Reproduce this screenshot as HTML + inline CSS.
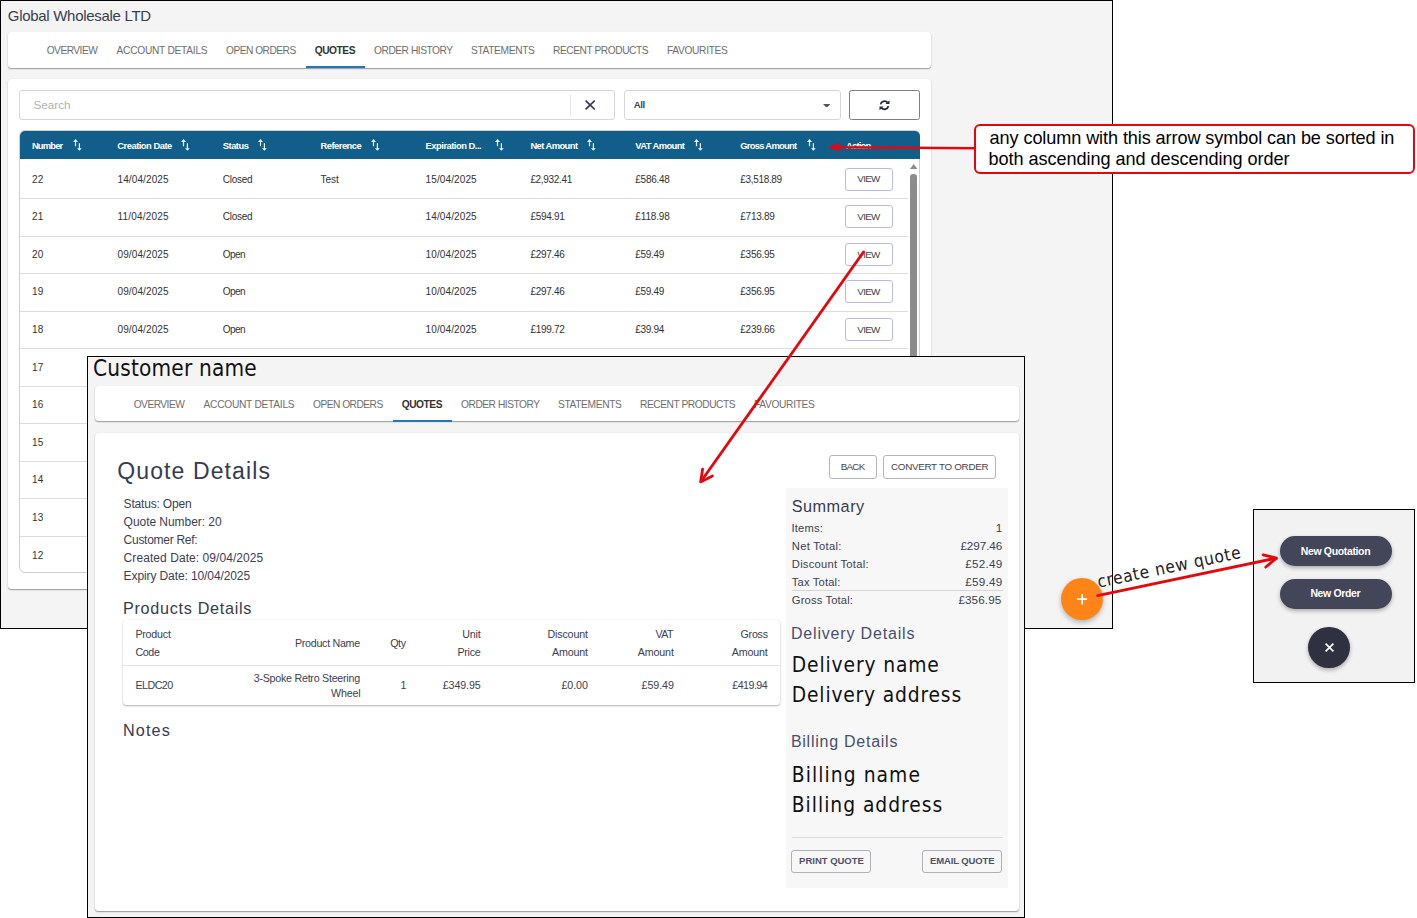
<!DOCTYPE html><html><head><meta charset="utf-8"><title>Quotes</title><style>
*{box-sizing:border-box}
html,body{margin:0;padding:0}
body{width:1417px;height:918px;position:relative;overflow:hidden;background:#fff;font-family:"Liberation Sans",sans-serif;color:#3c4053}
.a{position:absolute}
.box{position:absolute;border:1px solid #000;background:#f4f4f4}
.card{position:absolute;background:#fff;border-radius:3.5px;box-shadow:0 1px 1px rgba(0,0,0,.26),0 1px 2px rgba(0,0,0,.14),0 0 1px rgba(0,0,0,.1)}
.t{position:absolute;white-space:nowrap;line-height:1}
.sep{position:absolute;height:1px;background:#dcdcdc}
.btn{position:absolute;border:1px solid #b5b5b5;border-radius:3px;background:#fff}
</style></head><body>
<div class="box" style="left:0;top:0;width:1113px;height:629px"></div>
<div class="card" style="left:8px;top:32px;width:923px;height:36px"></div>
<div class="a" style="left:305.5px;top:66px;width:59px;height:2px;background:#1f78b8"></div>
<div class="card" style="left:8px;top:79px;width:923px;height:510px"></div>
<div class="a" style="left:19px;top:90px;width:596px;height:29.5px;border:1px solid #d6d6d6;border-radius:3px;background:#fff"></div>
<div class="a" style="left:570px;top:95px;width:1px;height:20px;background:#e6e6e6"></div>
<svg class="a" style="left:585px;top:100.3px" width="10.4" height="10" viewBox="0 0 10.4 10"><path d="M0.6 0.6 L9.8 9.4 M9.8 0.6 L0.6 9.4" stroke="#383b50" stroke-width="1.7" fill="none"/></svg>
<div class="a" style="left:624px;top:90px;width:217px;height:29.5px;border:1px solid #d6d6d6;border-radius:3px;background:#fff"></div>
<svg class="a" style="left:823px;top:103.8px" width="7.4" height="3.6" viewBox="0 0 7.4 3.6"><path d="M0 0 H7.4 L3.7 3.8 Z" fill="#555"/></svg>
<div class="a" style="left:849px;top:90px;width:71px;height:29.5px;border:1px solid #808080;border-radius:2.5px;background:#fff"></div>
<svg class="a" style="left:878.9px;top:100px" width="11" height="10.5" viewBox="0 0 11 10.5"><path d="M1.6 4.4 A4 4 0 0 1 8.6 2.6 M9.4 6.1 A4 4 0 0 1 2.4 7.9" stroke="#262a3a" stroke-width="1.8" fill="none"/><path d="M6.4 4.1 H10.5 V0.2 Z M4.6 6.4 H0.5 V10.3 Z" fill="#262a3a"/></svg>
<div class="a" style="left:19px;top:130px;width:901px;height:443px;border:1px solid #cfcfcf;border-radius:6px;background:#fff"></div>
<div class="a" style="left:19.5px;top:130.6px;width:900px;height:28.8px;background:#125e8a;border-radius:5px 5px 0 0"></div>
<svg class="a" style="left:73px;top:138.9px" width="9" height="12" viewBox="0 0 9 12"><path d="M0 3 L2.5 0 L5 3 Z M1.9 3 H3.1 V7.3 H1.9 Z M5.8 4.3 H7 V9.4 H5.8 Z M4 9.3 H8.8 L6.4 11.7 Z" fill="#fff" fill-opacity=".93"/></svg>
<svg class="a" style="left:181.3px;top:138.9px" width="9" height="12" viewBox="0 0 9 12"><path d="M0 3 L2.5 0 L5 3 Z M1.9 3 H3.1 V7.3 H1.9 Z M5.8 4.3 H7 V9.4 H5.8 Z M4 9.3 H8.8 L6.4 11.7 Z" fill="#fff" fill-opacity=".93"/></svg>
<svg class="a" style="left:258.3px;top:138.9px" width="9" height="12" viewBox="0 0 9 12"><path d="M0 3 L2.5 0 L5 3 Z M1.9 3 H3.1 V7.3 H1.9 Z M5.8 4.3 H7 V9.4 H5.8 Z M4 9.3 H8.8 L6.4 11.7 Z" fill="#fff" fill-opacity=".93"/></svg>
<svg class="a" style="left:370.7px;top:138.9px" width="9" height="12" viewBox="0 0 9 12"><path d="M0 3 L2.5 0 L5 3 Z M1.9 3 H3.1 V7.3 H1.9 Z M5.8 4.3 H7 V9.4 H5.8 Z M4 9.3 H8.8 L6.4 11.7 Z" fill="#fff" fill-opacity=".93"/></svg>
<svg class="a" style="left:494.5px;top:138.9px" width="9" height="12" viewBox="0 0 9 12"><path d="M0 3 L2.5 0 L5 3 Z M1.9 3 H3.1 V7.3 H1.9 Z M5.8 4.3 H7 V9.4 H5.8 Z M4 9.3 H8.8 L6.4 11.7 Z" fill="#fff" fill-opacity=".93"/></svg>
<svg class="a" style="left:587.1px;top:138.9px" width="9" height="12" viewBox="0 0 9 12"><path d="M0 3 L2.5 0 L5 3 Z M1.9 3 H3.1 V7.3 H1.9 Z M5.8 4.3 H7 V9.4 H5.8 Z M4 9.3 H8.8 L6.4 11.7 Z" fill="#fff" fill-opacity=".93"/></svg>
<svg class="a" style="left:694.4px;top:138.9px" width="9" height="12" viewBox="0 0 9 12"><path d="M0 3 L2.5 0 L5 3 Z M1.9 3 H3.1 V7.3 H1.9 Z M5.8 4.3 H7 V9.4 H5.8 Z M4 9.3 H8.8 L6.4 11.7 Z" fill="#fff" fill-opacity=".93"/></svg>
<svg class="a" style="left:806.5px;top:138.9px" width="9" height="12" viewBox="0 0 9 12"><path d="M0 3 L2.5 0 L5 3 Z M1.9 3 H3.1 V7.3 H1.9 Z M5.8 4.3 H7 V9.4 H5.8 Z M4 9.3 H8.8 L6.4 11.7 Z" fill="#fff" fill-opacity=".93"/></svg>
<div class="a" style="left:845px;top:167.9px;width:48px;height:23px;border:1px solid #b7bbe6;border-radius:3px;background:#fff"></div>
<div class="sep" style="left:20px;top:198.0px;width:888px"></div>
<div class="a" style="left:845px;top:205.4px;width:48px;height:23px;border:1px solid #b7bbe6;border-radius:3px;background:#fff"></div>
<div class="sep" style="left:20px;top:235.5px;width:888px"></div>
<div class="a" style="left:845px;top:242.9px;width:48px;height:23px;border:1px solid #b7bbe6;border-radius:3px;background:#fff"></div>
<div class="sep" style="left:20px;top:273.0px;width:888px"></div>
<div class="a" style="left:845px;top:280.4px;width:48px;height:23px;border:1px solid #b7bbe6;border-radius:3px;background:#fff"></div>
<div class="sep" style="left:20px;top:310.5px;width:888px"></div>
<div class="a" style="left:845px;top:317.9px;width:48px;height:23px;border:1px solid #b7bbe6;border-radius:3px;background:#fff"></div>
<div class="sep" style="left:20px;top:348.0px;width:888px"></div>
<div class="sep" style="left:20px;top:385.5px;width:888px"></div>
<div class="sep" style="left:20px;top:423.0px;width:888px"></div>
<div class="sep" style="left:20px;top:460.5px;width:888px"></div>
<div class="sep" style="left:20px;top:498.0px;width:888px"></div>
<div class="sep" style="left:20px;top:535.5px;width:888px"></div>
<svg class="a" style="left:910px;top:164.3px" width="7.4" height="5" viewBox="0 0 7.4 5"><path d="M0 5 L3.7 0 L7.4 5 Z" fill="#8a8a8a"/></svg>
<div class="a" style="left:910.4px;top:174px;width:6.5px;height:190px;background:#8c8c8c;border-radius:3.2px 3.2px 0 0"></div>
<div class="a" style="left:1061px;top:578.3px;width:42px;height:42px;border-radius:50%;background:#ff8418;box-shadow:0 2.5px 5px rgba(0,0,0,.27)"></div>
<svg class="a" style="left:1077px;top:594.4px" width="10.4" height="10.4" viewBox="0 0 10.4 10.4"><path d="M5.2 0 V10.4 M0 5.2 H10.4" stroke="#fff" stroke-width="1.7"/></svg>
<div class="box" style="left:87px;top:356px;width:938px;height:562px"></div>
<div class="card" style="left:95px;top:385.7px;width:924px;height:35.8px"></div>
<div class="a" style="left:392.5px;top:419.7px;width:59px;height:2px;background:#1f78b8"></div>
<div class="card" style="left:95px;top:433px;width:924px;height:478px"></div>
<div class="card" style="left:123px;top:620px;width:657px;height:85.3px;box-shadow:0 1px 2px rgba(0,0,0,.3),0 0 1px rgba(0,0,0,.1)"></div>
<div class="sep" style="left:123px;top:665px;width:657px;background:#e4e4e4"></div>
<div class="btn" style="left:829px;top:455px;width:48px;height:24px"></div>
<div class="btn" style="left:883px;top:455px;width:113.3px;height:24px"></div>
<div class="a" style="left:785.5px;top:488px;width:222.5px;height:400px;background:#f7f7f7"></div>
<div class="sep" style="left:791.5px;top:590.3px;width:211px;background:#d6d6d6"></div>
<div class="sep" style="left:791.5px;top:837px;width:211px;background:#dedede"></div>
<div class="btn" style="left:791.4px;top:849.5px;width:79.5px;height:23px;background:#f7f7f7;border-color:#b0b0b8"></div>
<div class="btn" style="left:922.2px;top:849.5px;width:80px;height:23px;background:#f7f7f7;border-color:#b0b0b8"></div>
<div class="box" style="left:1253px;top:509px;width:162px;height:174px;background:#f2f2f2"></div>
<div class="a" style="left:1279.8px;top:536.2px;width:112px;height:30px;border-radius:15px;background:#434558;box-shadow:0 2px 4px rgba(0,0,0,.3)"></div>
<div class="a" style="left:1279.8px;top:578.5px;width:112px;height:30px;border-radius:15px;background:#434558;box-shadow:0 2px 4px rgba(0,0,0,.3)"></div>
<div class="a" style="left:1308.4px;top:626.6px;width:41.6px;height:41.6px;border-radius:50%;background:#2f3141;box-shadow:0 2px 4px rgba(0,0,0,.3)"></div>
<svg class="a" style="left:1324.7px;top:643.1px" width="9" height="9" viewBox="0 0 9 9"><path d="M0.6 0.6 L8.4 8.4 M8.4 0.6 L0.6 8.4" stroke="#fff" stroke-width="1.7"/></svg>
<div class="a" style="left:974.2px;top:123.9px;width:441px;height:50px;border:2px solid #e4060c;border-radius:6px;background:#fff"></div>
<div class="t" style='left:7.80px;top:8.00px;font-size:15px;color:#3a3d50;letter-spacing:-0.296px'>Global Wholesale LTD</div>
<div class="t" style='left:46.70px;top:46.00px;font-size:10.2px;color:#6e6e6e;letter-spacing:-0.515px'>OVERVIEW</div>
<div class="t" style='left:116.50px;top:46.00px;font-size:10.2px;color:#6e6e6e;letter-spacing:-0.258px'>ACCOUNT DETAILS</div>
<div class="t" style='left:226.00px;top:46.00px;font-size:10.2px;color:#6e6e6e;letter-spacing:-0.509px'>OPEN ORDERS</div>
<div class="t" style='left:314.70px;top:46.00px;font-size:10.2px;color:#333;letter-spacing:-0.445px;font-weight:bold'>QUOTES</div>
<div class="t" style='left:374.00px;top:46.00px;font-size:10.2px;color:#6e6e6e;letter-spacing:-0.453px'>ORDER HISTORY</div>
<div class="t" style='left:471.00px;top:46.00px;font-size:10.2px;color:#6e6e6e;letter-spacing:-0.353px'>STATEMENTS</div>
<div class="t" style='left:553.00px;top:46.00px;font-size:10.2px;color:#6e6e6e;letter-spacing:-0.435px'>RECENT PRODUCTS</div>
<div class="t" style='left:667.00px;top:46.00px;font-size:10.2px;color:#6e6e6e;letter-spacing:-0.331px'>FAVOURITES</div>
<div class="t" style='left:33.50px;top:100.00px;font-size:11.8px;color:#b3b3b3;letter-spacing:-0.063px'>Search</div>
<div class="t" style='left:633.70px;top:100.00px;font-size:9.6px;color:#41465a;letter-spacing:-0.447px;font-weight:bold'>All</div>
<div class="t" style='left:31.90px;top:141.00px;font-size:9.4px;color:#fff;letter-spacing:-0.815px;font-weight:bold'>Number</div>
<div class="t" style='left:117.30px;top:141.00px;font-size:9.4px;color:#fff;letter-spacing:-0.503px;font-weight:bold'>Creation Date</div>
<div class="t" style='left:222.80px;top:141.00px;font-size:9.4px;color:#fff;letter-spacing:-0.508px;font-weight:bold'>Status</div>
<div class="t" style='left:320.60px;top:141.00px;font-size:9.4px;color:#fff;letter-spacing:-0.528px;font-weight:bold'>Reference</div>
<div class="t" style='left:425.60px;top:141.00px;font-size:9.4px;color:#fff;letter-spacing:-0.502px;font-weight:bold'>Expiration D...</div>
<div class="t" style='left:530.40px;top:141.00px;font-size:9.4px;color:#fff;letter-spacing:-0.566px;font-weight:bold'>Net Amount</div>
<div class="t" style='left:635.30px;top:141.00px;font-size:9.4px;color:#fff;letter-spacing:-0.594px;font-weight:bold'>VAT Amount</div>
<div class="t" style='left:740.30px;top:141.00px;font-size:9.4px;color:#fff;letter-spacing:-0.717px;font-weight:bold'>Gross Amount</div>
<div class="t" style='left:846.00px;top:141.00px;font-size:9.4px;color:#fff;letter-spacing:-0.787px;font-weight:bold'>Action</div>
<div class="t" style='left:31.90px;top:175.00px;font-size:10.0px;color:#323232;letter-spacing:0.300px'>22</div>
<div class="t" style='left:117.50px;top:175.00px;font-size:10.0px;color:#323232;letter-spacing:0.113px'>14/04/2025</div>
<div class="t" style='left:222.80px;top:175.00px;font-size:10.0px;color:#323232;letter-spacing:-0.253px'>Closed</div>
<div class="t" style='left:320.60px;top:175.00px;font-size:10.0px;color:#323232;letter-spacing:-0.054px'>Test</div>
<div class="t" style='left:425.60px;top:175.00px;font-size:10.0px;color:#323232;letter-spacing:0.113px'>15/04/2025</div>
<div class="t" style='left:530.40px;top:175.00px;font-size:10.0px;color:#323232;letter-spacing:-0.331px'>£2,932.41</div>
<div class="t" style='left:635.30px;top:175.00px;font-size:10.0px;color:#323232;letter-spacing:-0.270px'>£586.48</div>
<div class="t" style='left:740.30px;top:175.00px;font-size:10.0px;color:#323232;letter-spacing:-0.331px'>£3,518.89</div>
<div class="t" style='left:857.30px;top:174.00px;font-size:9.8px;color:#444;letter-spacing:-0.697px'>VIEW</div>
<div class="t" style='left:31.90px;top:212.00px;font-size:10.0px;color:#323232;letter-spacing:0.300px'>21</div>
<div class="t" style='left:117.50px;top:212.00px;font-size:10.0px;color:#323232;letter-spacing:0.195px'>11/04/2025</div>
<div class="t" style='left:222.80px;top:212.00px;font-size:10.0px;color:#323232;letter-spacing:-0.253px'>Closed</div>
<div class="t" style='left:425.60px;top:212.00px;font-size:10.0px;color:#323232;letter-spacing:0.113px'>14/04/2025</div>
<div class="t" style='left:530.40px;top:212.00px;font-size:10.0px;color:#323232;letter-spacing:-0.270px'>£594.91</div>
<div class="t" style='left:635.30px;top:212.00px;font-size:10.0px;color:#323232;letter-spacing:-0.147px'>£118.98</div>
<div class="t" style='left:740.30px;top:212.00px;font-size:10.0px;color:#323232;letter-spacing:-0.270px'>£713.89</div>
<div class="t" style='left:857.30px;top:212.00px;font-size:9.8px;color:#444;letter-spacing:-0.697px'>VIEW</div>
<div class="t" style='left:31.90px;top:250.00px;font-size:10.0px;color:#323232;letter-spacing:0.300px'>20</div>
<div class="t" style='left:117.50px;top:250.00px;font-size:10.0px;color:#323232;letter-spacing:0.113px'>09/04/2025</div>
<div class="t" style='left:222.80px;top:250.00px;font-size:10.0px;color:#323232;letter-spacing:-0.534px'>Open</div>
<div class="t" style='left:425.60px;top:250.00px;font-size:10.0px;color:#323232;letter-spacing:0.113px'>10/04/2025</div>
<div class="t" style='left:530.40px;top:250.00px;font-size:10.0px;color:#323232;letter-spacing:-0.270px'>£297.46</div>
<div class="t" style='left:635.30px;top:250.00px;font-size:10.0px;color:#323232;letter-spacing:-0.297px'>£59.49</div>
<div class="t" style='left:740.30px;top:250.00px;font-size:10.0px;color:#323232;letter-spacing:-0.270px'>£356.95</div>
<div class="t" style='left:857.30px;top:250.00px;font-size:9.8px;color:#444;letter-spacing:-0.697px'>VIEW</div>
<div class="t" style='left:31.90px;top:287.00px;font-size:10.0px;color:#323232;letter-spacing:0.300px'>19</div>
<div class="t" style='left:117.50px;top:287.00px;font-size:10.0px;color:#323232;letter-spacing:0.113px'>09/04/2025</div>
<div class="t" style='left:222.80px;top:287.00px;font-size:10.0px;color:#323232;letter-spacing:-0.534px'>Open</div>
<div class="t" style='left:425.60px;top:287.00px;font-size:10.0px;color:#323232;letter-spacing:0.113px'>10/04/2025</div>
<div class="t" style='left:530.40px;top:287.00px;font-size:10.0px;color:#323232;letter-spacing:-0.270px'>£297.46</div>
<div class="t" style='left:635.30px;top:287.00px;font-size:10.0px;color:#323232;letter-spacing:-0.297px'>£59.49</div>
<div class="t" style='left:740.30px;top:287.00px;font-size:10.0px;color:#323232;letter-spacing:-0.270px'>£356.95</div>
<div class="t" style='left:857.30px;top:287.00px;font-size:9.8px;color:#444;letter-spacing:-0.697px'>VIEW</div>
<div class="t" style='left:31.90px;top:325.00px;font-size:10.0px;color:#323232;letter-spacing:0.300px'>18</div>
<div class="t" style='left:117.50px;top:325.00px;font-size:10.0px;color:#323232;letter-spacing:0.113px'>09/04/2025</div>
<div class="t" style='left:222.80px;top:325.00px;font-size:10.0px;color:#323232;letter-spacing:-0.534px'>Open</div>
<div class="t" style='left:425.60px;top:325.00px;font-size:10.0px;color:#323232;letter-spacing:0.113px'>10/04/2025</div>
<div class="t" style='left:530.40px;top:325.00px;font-size:10.0px;color:#323232;letter-spacing:-0.270px'>£199.72</div>
<div class="t" style='left:635.30px;top:325.00px;font-size:10.0px;color:#323232;letter-spacing:-0.297px'>£39.94</div>
<div class="t" style='left:740.30px;top:325.00px;font-size:10.0px;color:#323232;letter-spacing:-0.270px'>£239.66</div>
<div class="t" style='left:857.30px;top:325.00px;font-size:9.8px;color:#444;letter-spacing:-0.697px'>VIEW</div>
<div class="t" style='left:31.90px;top:363.00px;font-size:10.0px;color:#323232;letter-spacing:0.300px'>17</div>
<div class="t" style='left:31.90px;top:400.00px;font-size:10.0px;color:#323232;letter-spacing:0.300px'>16</div>
<div class="t" style='left:31.90px;top:438.00px;font-size:10.0px;color:#323232;letter-spacing:0.300px'>15</div>
<div class="t" style='left:31.90px;top:475.00px;font-size:10.0px;color:#323232;letter-spacing:0.300px'>14</div>
<div class="t" style='left:31.90px;top:513.00px;font-size:10.0px;color:#323232;letter-spacing:0.300px'>13</div>
<div class="t" style='left:31.90px;top:551.00px;font-size:10.0px;color:#323232;letter-spacing:0.300px'>12</div>
<div class="t" style='left:93.00px;top:357.00px;font-size:22.4px;color:#111;letter-spacing:0.193px;font-family:"DejaVu Sans Condensed","DejaVu Sans",sans-serif'>Customer name</div>
<div class="t" style='left:133.70px;top:400.00px;font-size:10.2px;color:#6e6e6e;letter-spacing:-0.515px'>OVERVIEW</div>
<div class="t" style='left:203.50px;top:400.00px;font-size:10.2px;color:#6e6e6e;letter-spacing:-0.258px'>ACCOUNT DETAILS</div>
<div class="t" style='left:313.00px;top:400.00px;font-size:10.2px;color:#6e6e6e;letter-spacing:-0.509px'>OPEN ORDERS</div>
<div class="t" style='left:401.70px;top:400.00px;font-size:10.2px;color:#333;letter-spacing:-0.445px;font-weight:bold'>QUOTES</div>
<div class="t" style='left:461.00px;top:400.00px;font-size:10.2px;color:#6e6e6e;letter-spacing:-0.453px'>ORDER HISTORY</div>
<div class="t" style='left:558.00px;top:400.00px;font-size:10.2px;color:#6e6e6e;letter-spacing:-0.353px'>STATEMENTS</div>
<div class="t" style='left:640.00px;top:400.00px;font-size:10.2px;color:#6e6e6e;letter-spacing:-0.435px'>RECENT PRODUCTS</div>
<div class="t" style='left:754.00px;top:400.00px;font-size:10.2px;color:#6e6e6e;letter-spacing:-0.331px'>FAVOURITES</div>
<div class="t" style='left:117.30px;top:460.00px;font-size:23px;color:#373b50;letter-spacing:1.104px'>Quote Details</div>
<div class="t" style='left:123.60px;top:498.00px;font-size:12px;color:#3c4053;letter-spacing:-0.179px'>Status: Open</div>
<div class="t" style='left:123.60px;top:516.00px;font-size:12px;color:#3c4053;letter-spacing:-0.050px'>Quote Number: 20</div>
<div class="t" style='left:123.60px;top:534.00px;font-size:12px;color:#3c4053;letter-spacing:-0.277px'>Customer Ref:</div>
<div class="t" style='left:123.60px;top:552.00px;font-size:12px;color:#3c4053;letter-spacing:0.068px'>Created Date: 09/04/2025</div>
<div class="t" style='left:123.60px;top:570.00px;font-size:12px;color:#3c4053;letter-spacing:-0.103px'>Expiry Date: 10/04/2025</div>
<div class="t" style='left:122.90px;top:600.00px;font-size:16.2px;color:#373b50;letter-spacing:0.709px'>Products Details</div>
<div class="t" style='left:135.40px;top:629.00px;font-size:10.7px;color:#3c4053;letter-spacing:-0.227px'>Product</div>
<div class="t" style='left:135.40px;top:647.00px;font-size:10.7px;color:#3c4053;letter-spacing:-0.369px'>Code</div>
<div class="t" style='left:295.00px;top:638.00px;font-size:10.7px;color:#3c4053;letter-spacing:-0.288px'>Product Name</div>
<div class="t" style='left:390.20px;top:638.00px;font-size:10.7px;color:#3c4053;letter-spacing:-0.391px'>Qty</div>
<div class="t" style='left:462.30px;top:629.00px;font-size:10.7px;color:#3c4053;letter-spacing:-0.179px'>Unit</div>
<div class="t" style='left:457.40px;top:647.00px;font-size:10.7px;color:#3c4053;letter-spacing:-0.251px'>Price</div>
<div class="t" style='left:547.40px;top:629.00px;font-size:10.7px;color:#3c4053;letter-spacing:-0.145px'>Discount</div>
<div class="t" style='left:552.00px;top:647.00px;font-size:10.7px;color:#3c4053;letter-spacing:-0.173px'>Amount</div>
<div class="t" style='left:655.60px;top:629.00px;font-size:10.7px;color:#3c4053;letter-spacing:-0.684px'>VAT</div>
<div class="t" style='left:637.80px;top:647.00px;font-size:10.7px;color:#3c4053;letter-spacing:-0.153px'>Amount</div>
<div class="t" style='left:740.50px;top:629.00px;font-size:10.7px;color:#3c4053;letter-spacing:-0.240px'>Gross</div>
<div class="t" style='left:731.80px;top:647.00px;font-size:10.7px;color:#3c4053;letter-spacing:-0.193px'>Amount</div>
<div class="t" style='left:135.40px;top:680.00px;font-size:10.7px;color:#3c4053;letter-spacing:-0.511px'>ELDC20</div>
<div class="t" style='left:253.70px;top:673.00px;font-size:10.7px;color:#3c4053;letter-spacing:-0.250px'>3-Spoke Retro Steering</div>
<div class="t" style='left:331.00px;top:688.00px;font-size:10.7px;color:#3c4053;letter-spacing:-0.180px'>Wheel</div>
<div class="t" style='left:400.50px;top:680.00px;font-size:10.7px;color:#3c4053;letter-spacing:0.000px'>1</div>
<div class="t" style='left:442.70px;top:680.00px;font-size:10.7px;color:#3c4053;letter-spacing:-0.098px'>£349.95</div>
<div class="t" style='left:561.40px;top:680.00px;font-size:10.7px;color:#3c4053;letter-spacing:-0.050px'>£0.00</div>
<div class="t" style='left:641.60px;top:680.00px;font-size:10.7px;color:#3c4053;letter-spacing:-0.089px'>£59.49</div>
<div class="t" style='left:732.30px;top:680.00px;font-size:10.7px;color:#3c4053;letter-spacing:-0.548px'>£419.94</div>
<div class="t" style='left:122.90px;top:722.00px;font-size:16.2px;color:#373b50;letter-spacing:1.152px'>Notes</div>
<div class="t" style='left:840.80px;top:462.00px;font-size:9.8px;color:#444;letter-spacing:-0.748px'>BACK</div>
<div class="t" style='left:891.00px;top:462.00px;font-size:9.8px;color:#444;letter-spacing:-0.273px'>CONVERT TO ORDER</div>
<div class="t" style='left:791.80px;top:498.00px;font-size:16.3px;color:#373b50;letter-spacing:0.447px'>Summary</div>
<div class="t" style='left:791.60px;top:523.00px;font-size:11.2px;color:#3c4053;letter-spacing:0.150px'>Items:</div>
<div class="t" style='left:995.80px;top:522.00px;font-size:11.7px;color:#3c4053;letter-spacing:0.000px'>1</div>
<div class="t" style='left:791.80px;top:541.00px;font-size:11.2px;color:#3c4053;letter-spacing:0.272px'>Net Total:</div>
<div class="t" style='left:960.40px;top:540.00px;font-size:11.7px;color:#3c4053;letter-spacing:-0.058px'>£297.46</div>
<div class="t" style='left:791.80px;top:559.00px;font-size:11.2px;color:#3c4053;letter-spacing:0.253px'>Discount Total:</div>
<div class="t" style='left:965.30px;top:558.00px;font-size:11.7px;color:#3c4053;letter-spacing:0.251px'>£52.49</div>
<div class="t" style='left:791.80px;top:577.00px;font-size:11.2px;color:#3c4053;letter-spacing:0.162px'>Tax Total:</div>
<div class="t" style='left:965.30px;top:576.00px;font-size:11.7px;color:#3c4053;letter-spacing:0.251px'>£59.49</div>
<div class="t" style='left:791.80px;top:595.00px;font-size:11.2px;color:#3c4053;letter-spacing:0.148px'>Gross Total:</div>
<div class="t" style='left:958.40px;top:594.00px;font-size:11.7px;color:#3c4053;letter-spacing:0.109px'>£356.95</div>
<div class="t" style='left:790.90px;top:626.00px;font-size:16px;color:#4a4f6c;letter-spacing:0.831px'>Delivery Details</div>
<div class="t" style='left:791.80px;top:655.00px;font-size:20.8px;color:#111;letter-spacing:0.862px;font-family:"DejaVu Sans Condensed","DejaVu Sans",sans-serif'>Delivery name</div>
<div class="t" style='left:791.80px;top:685.00px;font-size:20.8px;color:#111;letter-spacing:0.818px;font-family:"DejaVu Sans Condensed","DejaVu Sans",sans-serif'>Delivery address</div>
<div class="t" style='left:790.90px;top:734.00px;font-size:16px;color:#4a4f6c;letter-spacing:0.747px'>Billing Details</div>
<div class="t" style='left:791.80px;top:765.00px;font-size:20.8px;color:#111;letter-spacing:1.067px;font-family:"DejaVu Sans Condensed","DejaVu Sans",sans-serif'>Billing name</div>
<div class="t" style='left:791.80px;top:795.00px;font-size:20.8px;color:#111;letter-spacing:0.976px;font-family:"DejaVu Sans Condensed","DejaVu Sans",sans-serif'>Billing address</div>
<div class="t" style='left:799.10px;top:856.00px;font-size:9.5px;color:#4d526c;letter-spacing:-0.018px;font-weight:bold'>PRINT QUOTE</div>
<div class="t" style='left:930.00px;top:856.00px;font-size:9.5px;color:#4d526c;letter-spacing:-0.133px;font-weight:bold'>EMAIL QUOTE</div>
<div class="t" style='left:1300.70px;top:546.00px;font-size:10.5px;color:#fff;letter-spacing:-0.347px;font-weight:bold'>New Quotation</div>
<div class="t" style='left:1310.40px;top:588.00px;font-size:10.5px;color:#fff;letter-spacing:-0.364px;font-weight:bold'>New Order</div>
<div class="t" style='left:989.60px;top:129.00px;font-size:18.1px;color:#000;letter-spacing:-0.091px'>any column with this arrow symbol can be sorted in</div>
<div class="t" style='left:988.60px;top:150.00px;font-size:18.1px;color:#000;letter-spacing:-0.058px'>both ascending and descending order</div>
<div class="t" style='left:1096.40px;top:558.80px;font-size:17.2px;color:#222;letter-spacing:0.695px;font-family:"DejaVu Sans Condensed","DejaVu Sans",sans-serif;transform-origin:72.70px 50%;transform:rotate(-11.8deg)'>create new quote</div>
<svg class="a" style="left:0;top:0" width="1417" height="918" viewBox="0 0 1417 918" fill="none" stroke="#e3080c" stroke-width="2.8" stroke-linecap="round" stroke-linejoin="round">
<path d="M975 148.2 L836 147.2" stroke-width="2.5"/><path d="M829.6 147 L839.6 143.3 L837.4 147.1 L839.6 150.9 Z" fill="#e3080c" stroke-width="1" stroke-linejoin="miter"/>
<path d="M863.5 252 L701.5 480.8"/><path d="M702.6 469.2 L700.6 481.9 L712.4 476"/>
<path d="M1097.6 595.6 L1275.5 558.3"/><path d="M1263.2 554.9 L1276.6 558.1 L1265.8 567"/>
</svg>
</body></html>
